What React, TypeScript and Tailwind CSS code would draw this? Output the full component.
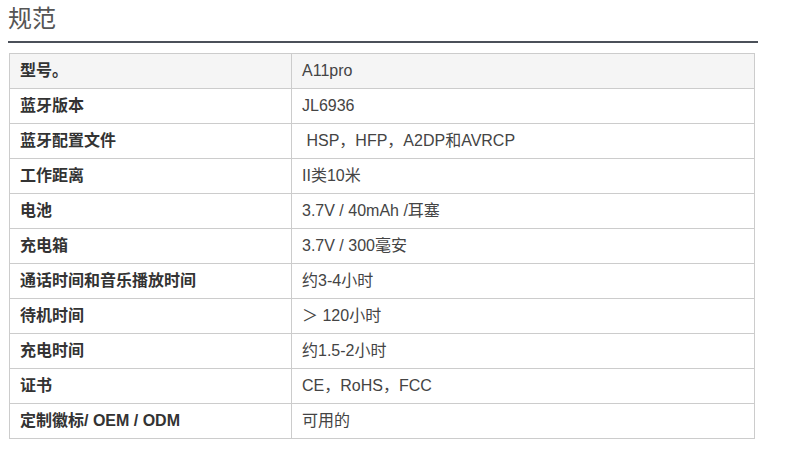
const rows: [string, string][] = [
  ["型号。", "A11pro"],
  ["蓝牙版本", "JL6936"],
  ["蓝牙配置文件", " HSP，HFP，A2DP和AVRCP"],
  ["工作距离", "II类10米"],
  ["电池", "3.7V / 40mAh /耳塞"],
  ["充电箱", "3.7V / 300毫安"],
  ["通话时间和音乐播放时间", "约3-4小时"],
  ["待机时间", "＞ 120小时"],
  ["充电时间", "约1.5-2小时"],
  ["证书", "CE，RoHS，FCC"],
  ["定制徽标/ OEM / ODM", "可用的"],
];

export default function App() {
  return (
    <div className="w-[807px] h-[450px] bg-white font-['Liberation_Sans','Noto_Sans_CJK_SC',sans-serif] text-[#333]">
      <div className="ml-[8px] w-[750px] border-b-2 border-[#4b5059] h-[43px] pt-[2px]">
        <h2 className="text-[24px] leading-[34px] text-[#555]">规范</h2>
      </div>
      <table className="ml-[9px] mt-[10px] w-[746px] border-collapse border border-[#ccc] text-[16px]">
        <tbody>
          {rows.map(([k, v], i) => (
            <tr key={k} className={i === 0 ? "bg-[#f5f5f5]" : "bg-white"}>
              <td className="w-[282px] h-[35px] border border-[#ccc] px-[10px] font-bold whitespace-pre">{k}</td>
              <td className="h-[35px] border border-[#ccc] px-[10px] whitespace-pre text-[#444]">{v}</td>
            </tr>
          ))}
        </tbody>
      </table>
    </div>
  );
}
